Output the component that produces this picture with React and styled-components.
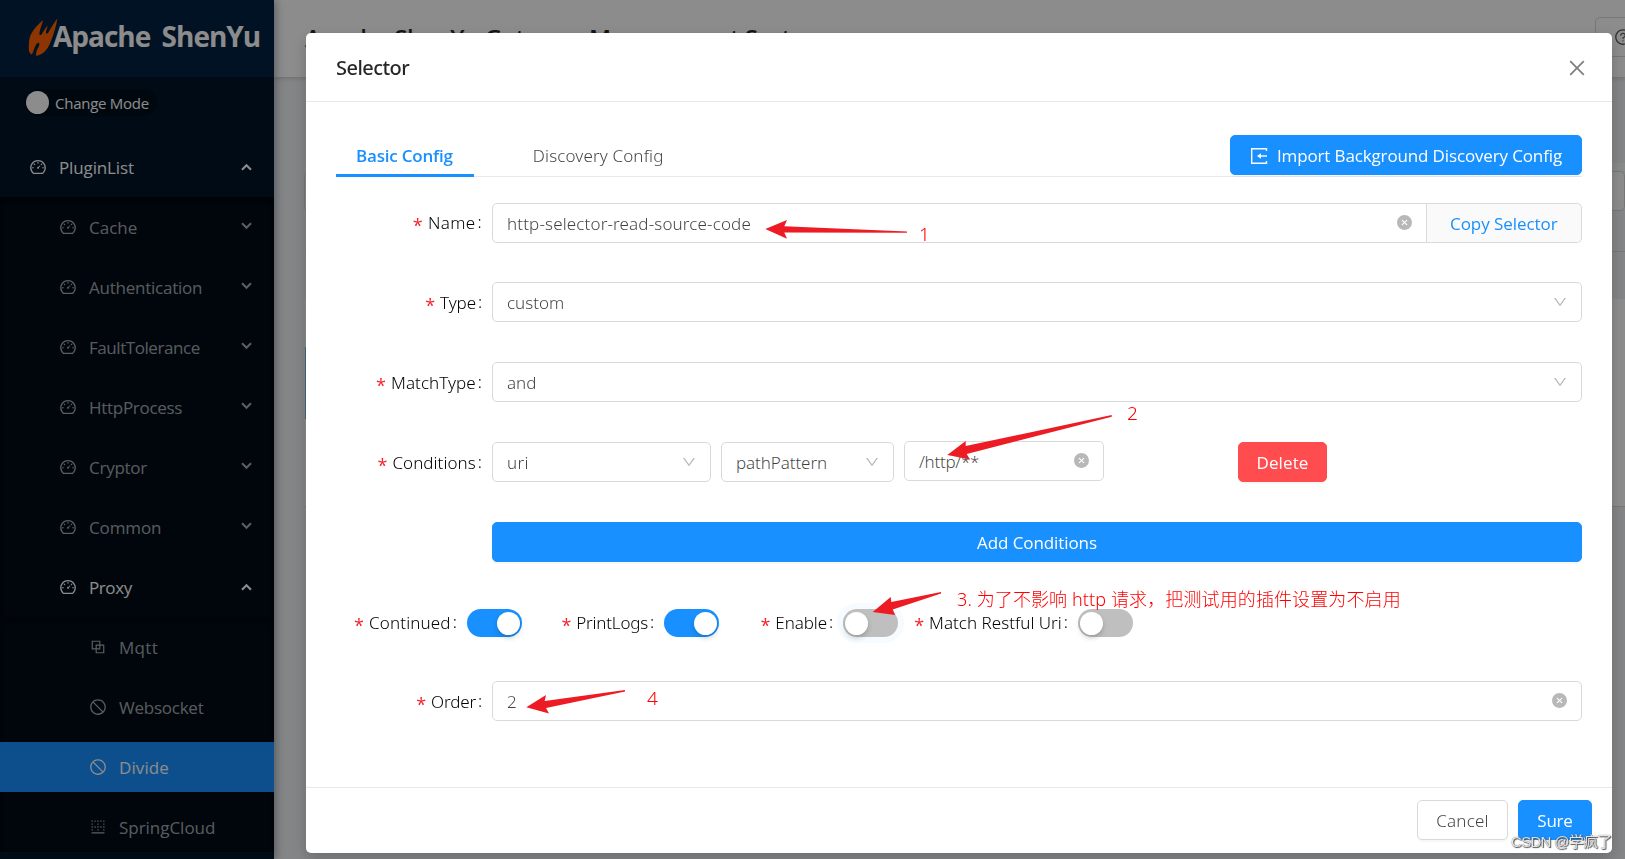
import React from 'react';
import styled, { createGlobalStyle, css } from 'styled-components';
import {
  AiOutlineDashboard,
  AiOutlineBlock,
  AiOutlineStop,
  AiOutlineBorderBottom,
  AiOutlineClose,
  AiOutlineDown,
  AiFillCloseCircle,
  AiOutlineQuestionCircle,
} from 'react-icons/ai';

const regular = '"Open Sans", "Noto Sans CJK SC", sans-serif';
const light = '"Noto Sans", "Noto Sans CJK SC", sans-serif';

const GlobalStyle = createGlobalStyle`
  * { box-sizing: border-box; }
  body { margin: 0; overflow: hidden; font-family: ${regular}; font-size: 17px; }
  svg { display: block; }
`;

/* ---------- page behind the dialog ---------- */

const Page = styled.div`
  display: flex;
  height: 859px;
  overflow: hidden;
  background: #f0f2f5;
`;

const Sider = styled.aside`
  width: 274px;
  flex: none;
  overflow: hidden;
  background: #001529;
  box-shadow: 2px 0 8px rgba(0, 21, 41, 0.35);
  z-index: 1;
`;

const Brand = styled.div`
  display: flex;
  align-items: flex-start;
  height: 77px;
  padding: 18px 0 0 28px;
  background: #002140;
`;

const Flame = styled.svg`
  width: 30px;
  height: 39px;
  flex: none;
`;

const BrandName = styled.span`
  margin: -1px 0 0 -5px;
  font: 700 28px/38px ${regular};
  letter-spacing: -1px;
  word-spacing: 5px;
  white-space: nowrap;
  color: #fff;
`;

const ModeRow = styled.div`
  display: flex;
  height: 65px;
  padding: 12px 0 0 25px;
`;

const ModePill = styled.div`
  display: flex;
  align-items: center;
  gap: 6px;
  width: 132px;
  height: 27px;
  padding-left: 1px;
  border-radius: 14px;
  background: #000f1c;
  font-size: 15px;
  letter-spacing: -0.26px;
  white-space: nowrap;
  color: #fff;
`;

const ModeKnob = styled.i`
  width: 23px;
  height: 23px;
  border-radius: 50%;
  background: #fff;
`;

const MenuItem = styled.div`
  display: flex;
  align-items: center;
  height: 50px;
  margin-bottom: ${(p) => p.$gap ?? 10}px;
  padding: 0 22px 0 ${(p) => p.$indent}px;
  letter-spacing: ${(p) => p.$ls}px;
  color: ${(p) => (p.$bright ? '#fff' : 'rgba(255, 255, 255, 0.65)')};
  background: ${(p) => (p.$selected ? '#1890ff' : 'transparent')};
  svg { flex: none; }
`;

const MenuText = styled.span`
  flex: 1;
  margin: 1px 0 0 12px;
`;

const SubMenu = styled.div`
  padding-top: 5px;
  background: #000c17;
  box-shadow: inset 0 3px 10px rgba(0, 0, 0, 0.45);
`;

const Caret = styled.svg`
  width: 11px;
  height: 8px;
  margin-top: ${(p) => (p.$open ? 0 : -3)}px;
  transform: ${(p) => (p.$open ? 'none' : 'rotate(180deg)')};
`;

const Main = styled.main`
  flex: 1;
  display: flex;
  flex-direction: column;
`;

const Header = styled.header`
  display: flex;
  justify-content: space-between;
  height: 77px;
  padding: 17px 0 0 31px;
  background: #fff;
  box-shadow: 0 1px 5px rgba(0, 21, 41, 0.2);
`;

const PageTitle = styled.h1`
  margin: 1px 0 0;
  font: 600 24px/40px ${regular};
  letter-spacing: -0.38px;
  color: rgba(0, 0, 0, 0.85);
`;

const HelpButton = styled.div`
  display: flex;
  align-items: center;
  width: 60px;
  height: 40px;
  margin-right: -30px;
  padding-left: 18px;
  border: 1px solid #d9d9d9;
  border-radius: 5px;
  color: rgba(0, 0, 0, 0.65);
`;

const Filler = styled.div`
  height: ${(p) => p.$h}px;
  margin-left: 31px;
  background: ${(p) => p.$bg};
  border-bottom: ${(p) => (p.$line ? '1px solid #d9dbde' : '0')};
`;

const SearchStrip = styled.div`
  height: 40px;
  margin-left: 30px;
  border: 1px solid #d9d9d9;
  border-radius: 5px;
  background: #fff;
`;

const TableBody = styled.div`
  height: 208px;
  margin-left: 31px;
  padding-top: 48px;
  border-bottom: 1px solid #dcdcdc;
  background: #fff;
`;

const SelectedCard = styled.div`
  height: 72px;
  width: 400px;
  border-left: 1px solid #7fb4ea;
`;

/* ---------- dialog ---------- */

const Mask = styled.div`
  position: fixed;
  inset: 0;
  z-index: 10;
  display: flex;
  align-items: flex-start;
  padding: 33px 0 0 306px;
  background: rgba(0, 0, 0, 0.45);
`;

const Dialog = styled.section`
  display: flex;
  flex-direction: column;
  width: 1306px;
  height: 820px;
  border-radius: 5px;
  background: #fff;
  box-shadow: 0 5px 15px rgba(0, 0, 0, 0.2);
`;

const DialogHead = styled.div`
  display: flex;
  align-items: center;
  justify-content: space-between;
  height: 69px;
  padding: 2px 24px 0 30px;
  border-bottom: 1px solid #e8e8e8;
  color: rgba(0, 0, 0, 0.5);
`;

const DialogTitle = styled.h2`
  margin: 0;
  font: 500 20px/28px ${light};
  letter-spacing: -0.55px;
  color: rgba(0, 0, 0, 0.85);
`;

const DialogBody = styled.div`
  flex: 1;
  padding: 33px 30px 0;
`;

const Tabs = styled.div`
  display: flex;
  align-items: flex-start;
  height: 42px;
  border-bottom: 1px solid #e8e8e8;
`;

const Tab = styled.div`
  height: 42px;
  margin-right: 39px;
  padding: 0 21px 0 20px;
  border-bottom: ${(p) => (p.$active ? '3px solid #1890ff' : '0')};
  font: ${(p) => (p.$active ? `600 17px/41px ${regular}` : `300 17px/41px ${light}`)};
  letter-spacing: ${(p) => p.$ls}px;
  white-space: nowrap;
  color: ${(p) => (p.$active ? '#1890ff' : 'rgba(0, 0, 0, 0.75)')};
`;

const tones = {
  primary: css`background: #1890ff; border-color: #1890ff; color: #fff;`,
  danger: css`background: #ff4d4f; border-color: #ff4d4f; color: #fff;`,
  plain: css`background: #fff; border-color: #d9d9d9; color: rgba(0, 0, 0, 0.75);`,
};

const Button = styled.button`
  display: flex;
  align-items: center;
  justify-content: center;
  gap: 9px;
  flex: none;
  width: ${(p) => p.$w}px;
  height: 40px;
  padding: 1px 0 0;
  border: 1px solid;
  border-radius: 5px;
  box-shadow: 0 2px 0 rgba(0, 0, 0, 0.03);
  font: ${(p) => (p.$tone === 'plain' ? `300 17px ${light}` : `400 17px ${regular}`)};
  letter-spacing: ${(p) => p.$ls}px;
  white-space: nowrap;
  ${(p) => tones[p.$tone]}
`;

const ImportGlyph = styled.svg`
  width: 18px;
  height: 18px;
  flex: none;
`;

const TabsAction = styled.div`
  margin-left: auto;
`;

const FormRow = styled.div`
  display: flex;
  height: 40px;
  margin-top: ${(p) => p.$top ?? 40}px;
`;

const Label = styled.label`
  display: flex;
  align-items: center;
  justify-content: flex-end;
  flex: none;
  width: ${(p) => (p.$inline ? 'auto' : '156px')};
  padding: ${(p) => (p.$raised || p.$inline ? '0 10px 1px 0' : '1px 10px 0 0')};
  font: 300 17px ${light};
  letter-spacing: ${(p) => p.$ls}px;
  white-space: nowrap;
  color: #000;
  &::before {
    content: '*';
    margin: 5px 5px 0 0;
    font: 400 18px ${regular};
    color: #f5222d;
  }
  &::after {
    content: ':';
    margin: -2px 0 0 2px;
  }
`;

const Control = styled.div`
  display: flex;
  align-items: center;
  justify-content: space-between;
  flex: ${(p) => (p.$w ? 'none' : 1)};
  width: ${(p) => (p.$w ? `${p.$w}px` : 'auto')};
  height: 40px;
  margin: ${(p) => p.$shift ?? 0}px 10px 0 0;
  padding: 0 13px 0 14px;
  border: 1px solid #d9d9d9;
  border-radius: ${(p) => (p.$joined ? '5px 0 0 5px' : '5px')};
  background: #fff;
  font: 300 17px ${light};
  letter-spacing: ${(p) => p.$ls}px;
  white-space: nowrap;
  color: rgba(0, 0, 0, 0.75);
  &:last-child { margin-right: 0; }
  svg { color: rgba(0, 0, 0, 0.28); margin-bottom: 1px; }
  ${(p) => p.$joined && css`margin-right: 0;`}
`;

const Value = styled.span`
  margin-top: ${(p) => p.$top ?? 0}px;
`;

const Addon = styled.div`
  width: 155px;
  height: 40px;
  padding: 1px 0 0 23px;
  border: 1px solid #d9d9d9;
  border-left: 0;
  border-radius: 0 5px 5px 0;
  background: #fafafa;
  font: 400 17px/38px ${regular};
  letter-spacing: -0.06px;
  white-space: nowrap;
  color: #1890ff;
`;

const Spacer = styled.div`
  flex: none;
  width: ${(p) => p.$w}px;
`;

const SwitchRow = styled.div`
  display: flex;
  align-items: center;
  height: 40px;
  margin-top: 41px;
  padding-left: 20px;
`;

const SwitchItem = styled.div`
  display: flex;
  align-items: center;
  flex: none;
  width: ${(p) => p.$w}px;
  justify-content: flex-end;
`;

const Switch = styled.div`
  display: flex;
  align-items: center;
  justify-content: ${(p) => (p.$on ? 'flex-end' : 'flex-start')};
  flex: none;
  width: 55px;
  height: 28px;
  padding: 0 2px;
  border-radius: 14px;
  background: ${(p) => (p.$on ? '#1890ff' : '#bfbfbf')};
  box-shadow: ${(p) => (p.$focus ? '0 0 0 6px rgba(24, 144, 255, 0.04)' : 'none')};
  &::before {
    content: '';
    width: 23px;
    height: 23px;
    border-radius: 50%;
    background: #fff;
    box-shadow: 0 3px 5px rgba(0, 35, 11, 0.2);
  }
`;

const DialogFoot = styled.div`
  display: flex;
  justify-content: flex-end;
  gap: 10px;
  height: 66px;
  padding: 12px 20px 0;
  border-top: 1px solid #e8e8e8;
`;

/* ---------- notes drawn over the page ---------- */

const Notes = styled.div`
  position: fixed;
  inset: 0;
  z-index: 20;
  pointer-events: none;
`;

const Arrows = styled.svg`
  position: absolute;
  inset: 0;
  width: 1625px;
  height: 859px;
  fill: #ed1c24;
`;

const Note = styled.span`
  position: absolute;
  left: ${(p) => p.$x}px;
  top: ${(p) => p.$y}px;
  font: 300 ${(p) => p.$size ?? 19}px/24px ${light};
  letter-spacing: ${(p) => p.$ls ?? 0}px;
  white-space: nowrap;
  color: #f00;
`;

const Watermark = styled.span`
  position: absolute;
  left: 1511px;
  top: 830px;
  font: 400 15px/24px "Liberation Sans", "Noto Sans CJK SC", sans-serif;
  letter-spacing: -0.7px;
  white-space: nowrap;
  color: rgba(255, 255, 255, 0.85);
  text-shadow: 0 0 1px #333, 1px 1px 1px #555;
`;

const Arrow = ({ open }) => (
  <Caret $open={open} viewBox="0 0 11 8">
    <path d="M1 6.7 5.500 2.2 10 6.7" fill="none" stroke="currentColor" strokeWidth="2.1" />
  </Caret>
);

const groups = [
  ['Cache', -0.01],
  ['Authentication', -0.24],
  ['FaultTolerance', -0.44],
  ['HttpProcess', -0.29],
  ['Cryptor', -0.26],
  ['Common', -0.13],
];

const proxies = [
  ['Mqtt', AiOutlineBlock, 0.3],
  ['Websocket', AiOutlineStop, -0.24],
  ['Divide', AiOutlineStop, 0.1],
  ['SpringCloud', AiOutlineBorderBottom, -0.03],
];

function Sidebar() {
  return (
    <Sider>
      <Brand>
        <Flame viewBox="0 0 30 39">
          <path
            d="M15.3 2C8 8 1.500 15 1 24c-.3 6-1 11 2.800 12.500 2-3 2.200-7 4.700-10.500 2.500-2.500 3.500-1 2.500 2-1.500 3-3.500 6-2.700 10C17 36 21 29 23 23c3-8 5.500-15 6.300-22.500-4 5-6.500 10-9.300 14.500-1 1.500-2.500.5-2-1.500L19.800 7.500c-3 3-4.500 6-6.300 9-1.500 1.500-2.500 0-2-2C12.500 10 14 6 15.300 2Z"
            fill="#ff6200"
          />
        </Flame>
        <BrandName>Apache ShenYu</BrandName>
      </Brand>
      <ModeRow>
        <ModePill><ModeKnob />Change Mode</ModePill>
      </ModeRow>
      <MenuItem $indent={29} $ls={-0.13} $gap={5} $bright>
        <AiOutlineDashboard size={18} />
        <MenuText>PluginList</MenuText>
        <Arrow open />
      </MenuItem>
      <SubMenu>
        {groups.map(([name, ls]) => (
          <MenuItem key={name} $indent={59} $ls={ls}>
            <AiOutlineDashboard size={18} />
            <MenuText>{name}</MenuText>
            <Arrow />
          </MenuItem>
        ))}
        <MenuItem $indent={59} $ls={-0.4} $gap={5} $bright>
          <AiOutlineDashboard size={18} />
          <MenuText>Proxy</MenuText>
          <Arrow open />
        </MenuItem>
        <SubMenu>
          {proxies.map(([name, Icon, ls]) => (
            <MenuItem key={name} $indent={89} $ls={ls} $selected={name === 'Divide'} $bright={name === 'Divide'}>
              <Icon size={18} />
              <MenuText>{name}</MenuText>
            </MenuItem>
          ))}
        </SubMenu>
      </SubMenu>
    </Sider>
  );
}

function SelectorDialog() {
  return (
    <Dialog>
      <DialogHead>
        <DialogTitle>Selector</DialogTitle>
        <AiOutlineClose size={22} />
      </DialogHead>
      <DialogBody>
        <Tabs>
          <Tab $active $ls={-0.2}>Basic Config</Tab>
          <Tab $ls={0.14}>Discovery Config</Tab>
          <TabsAction>
            <Button $tone="primary" $w={352} $ls={-0.14}>
              <ImportGlyph viewBox="0 0 18 18">
                <path d="M16.500 4V1.700H1.700V16.300H16.500V14" fill="none" stroke="currentColor" strokeWidth="1.4" />
                <path d="M17 9H9" stroke="currentColor" strokeWidth="1.4" />
                <path d="M7 9 11 6.300V11.700Z" fill="currentColor" />
              </ImportGlyph>
              Import Background Discovery Config
            </Button>
          </TabsAction>
        </Tabs>
        <FormRow $top={26}>
          <Label $ls={0.33} $raised>Name</Label>
          <Control $joined $ls={0.14}>
            <Value $top={1}>http-selector-read-source-code</Value>
            <AiFillCloseCircle size={17} />
          </Control>
          <Addon>Copy Selector</Addon>
        </FormRow>
        <FormRow $top={39}>
          <Label $ls={-0.1}>Type</Label>
          <Control>
            <Value>custom</Value>
            <AiOutlineDown size={16} />
          </Control>
        </FormRow>
        <FormRow>
          <Label $ls={0.06}>MatchType</Label>
          <Control>
            <Value>and</Value>
            <AiOutlineDown size={16} />
          </Control>
        </FormRow>
        <FormRow>
          <Label $ls={0.06}>Conditions</Label>
          <Control $w={219} $ls={0.3}>
            <Value>uri</Value>
            <AiOutlineDown size={16} />
          </Control>
          <Control $w={173} $ls={-0.1}>
            <Value>pathPattern</Value>
            <AiOutlineDown size={16} />
          </Control>
          <Control $w={200} $shift={-1} $ls={-0.29}>
            <Value $top={1}>/http/**</Value>
            <AiFillCloseCircle size={17} />
          </Control>
          <Spacer $w={124} />
          <Button $tone="danger" $w={89} $ls={0.1}>Delete</Button>
        </FormRow>
        <FormRow>
          <Spacer $w={156} />
          <Button $tone="primary" $w={1090} $ls={-0.08}>Add Conditions</Button>
        </FormRow>
        <SwitchRow>
          <SwitchItem $w={166}>
            <Label $inline $ls={0.15}>Continued</Label>
            <Switch $on />
          </SwitchItem>
          <SwitchItem $w={197}>
            <Label $inline $ls={-0.19}>PrintLogs</Label>
            <Switch $on />
          </SwitchItem>
          <SwitchItem $w={179}>
            <Label $inline $ls={-0.1}>Enable</Label>
            <Switch $focus />
          </SwitchItem>
          <SwitchItem $w={235}>
            <Label $inline $ls={0.02}>Match Restful Uri</Label>
            <Switch />
          </SwitchItem>
        </SwitchRow>
        <FormRow $top={38}>
          <Label $ls={-0.15}>Order</Label>
          <Control>
            <Value $top={1}>2</Value>
            <AiFillCloseCircle size={17} />
          </Control>
        </FormRow>
      </DialogBody>
      <DialogFoot>
        <Button $tone="plain" $w={91} $ls={0.2}>Cancel</Button>
        <Button $tone="primary" $w={74} $ls={-0.2}>Sure</Button>
      </DialogFoot>
    </Dialog>
  );
}

export default function App() {
  return (
    <>
      <GlobalStyle />
      <Page>
        <Sidebar />
        <Main>
          <Header>
            <PageTitle>Apache ShenYu Gateway Management System</PageTitle>
            <HelpButton><AiOutlineQuestionCircle size={18} /></HelpButton>
          </Header>
          <Filler $h={86} />
          <Filler $h={8} $bg="#fafafa" />
          <SearchStrip />
          <Filler $h={41} $line />
          <Filler $h={47} />
          <TableBody><SelectedCard /></TableBody>
        </Main>
      </Page>
      <Mask>
        <SelectorDialog />
      </Mask>
      <Notes>
        <Arrows viewBox="0 0 1625 859">
          <path d="M765.300 229 787 220 784.300 226.200 907 231.500V232.800L784.300 232.500 787 238.800Z" />
          <path d="M947.300 455 965.700 441V446L1111.700 415V416.700L966.700 454 970 459.500Z" />
          <path d="M872.700 612 890.700 597 891.300 602 941 592V593.600L892.700 609.500 895.300 615Z" />
          <path d="M526.300 707.300 546 695 544.700 701 625 690V691.500L546 708 549 713.500Z" />
        </Arrows>
        <Note $x={919} $y={222}>1</Note>
        <Note $x={1127} $y={401}>2</Note>
        <Note $x={957} $y={587} $size={18} $ls={0.11}>3. 为了不影响 http 请求，把测试用的插件设置为不启用</Note>
        <Note $x={647} $y={686}>4</Note>
        <Watermark>CSDN @学疯了</Watermark>
      </Notes>
    </>
  );
}
